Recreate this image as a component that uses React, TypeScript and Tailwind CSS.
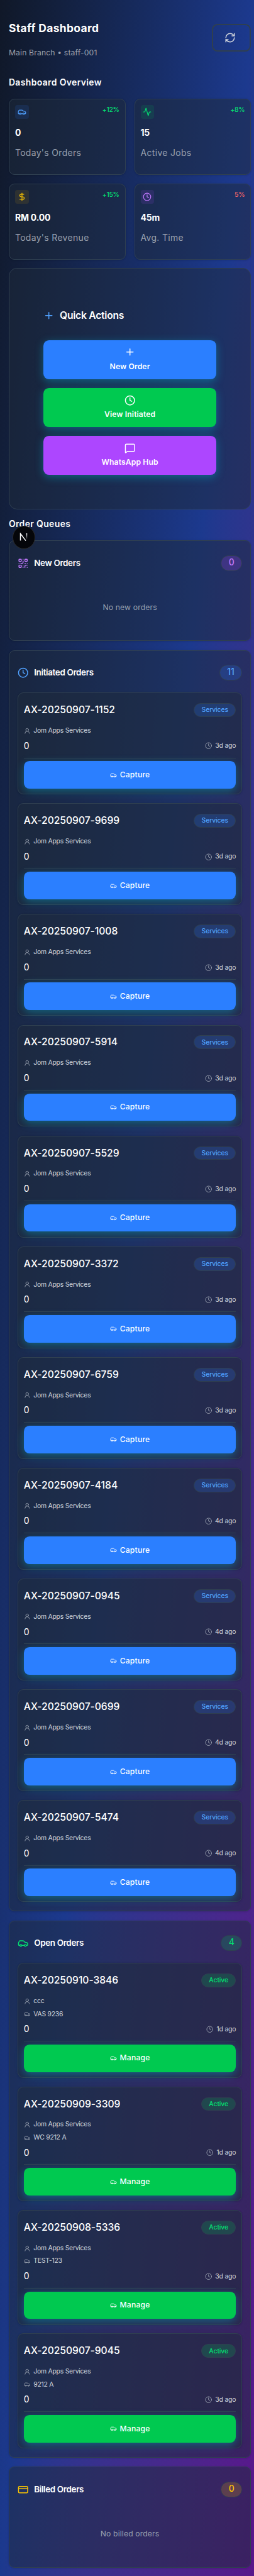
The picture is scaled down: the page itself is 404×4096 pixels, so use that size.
import React from "react";
import { Activity, Car, Clock, CreditCard, DollarSign, MessageSquare, Plus, QrCode, RefreshCw, UserRound } from "lucide-react";

const initiated = [
  ["1152", "3d"], ["9699", "3d"], ["1008", "3d"], ["5914", "3d"], ["5529", "3d"], ["3372", "3d"],
  ["6759", "3d"], ["4184", "4d"], ["0945", "4d"], ["0699", "4d"], ["5474", "4d"],
];

const open = [
  { id: "AX-20250910-3846", who: "ccc", plate: "VAS 9236", age: "1d" },
  { id: "AX-20250909-3309", who: "Jom Apps Services", plate: "WC 9212 A", age: "1d" },
  { id: "AX-20250908-5336", who: "Jom Apps Services", plate: "TEST-123", age: "3d" },
  { id: "AX-20250907-9045", who: "Jom Apps Services", plate: "9212 A", age: "3d" },
];

const glow = "shadow-[0_4px_14px_rgba(6,182,212,0.4)]";

function Stat({ icon, box, delta, deltaColor, value, label }: {
  icon: React.ReactNode; box: string; delta: string; deltaColor: string; value: string; label: string;
}) {
  return (
    <div className="h-[121.5px] rounded-[9px] border border-[#2f3f50] bg-[#1e2939]/50 px-[9px] pt-[9px] shadow-sm">
      <div className="flex items-start justify-between">
        <div className={`flex size-[22px] items-center justify-center rounded-[4px] ${box}`}>{icon}</div>
        <span className={`pt-[1px] text-[10.5px] leading-[15px] font-medium tracking-[-0.3px] ${deltaColor}`}>{delta}</span>
      </div>
      <div className="mt-[12px] text-[14px] leading-[21px] font-bold tracking-[-0.15px] text-white">{value}</div>
      <div className="mt-[10px] text-[14px] leading-[24px] tracking-[0.35px] text-[#99a1af]">{label}</div>
    </div>
  );
}

function Action({ icon, label, color }: { icon: React.ReactNode; label: string; color: string }) {
  return (
    <button className={`flex h-[62.6px] w-full flex-col items-center justify-start gap-[4px] rounded-[9px] pt-[11px] text-white ${glow} ${color}`}>
      {icon}
      <span className="text-[12.25px] leading-[20px] font-semibold tracking-[0.1px]">{label}</span>
    </button>
  );
}

function Queue({ icon, title, count, badge, className, children }: {
  icon: React.ReactNode; title: string; count: number; badge: string; className: string; children: React.ReactNode;
}) {
  return (
    <section className={`rounded-[9px] border border-[#2f3f50] bg-[#1e2939]/50 px-[13px] pt-[23px] shadow-sm ${className}`}>
      <div className="flex h-[25px] items-center justify-between">
        <div className="flex items-center gap-[9px]">
          {icon}
          <h3 className="text-[13.5px] leading-[20px] font-semibold tracking-[-0.36px] text-white">{title}</h3>
        </div>
        <span className={`flex h-[25px] items-center rounded-full border border-[#2f3f50] px-[11.5px] pb-[2px] text-[14px] leading-none font-medium ${badge}`}>{count}</span>
      </div>
      {children}
    </section>
  );
}

function Order({ id, who, plate, age, tag, tagColor, action, actionColor }: {
  id: string; who: string; plate?: string; age: string; tag: string; tagColor: string; action: string; actionColor: string;
}) {
  return (
    <article className={`rounded-[9px] border border-[#2f3f50] bg-[#1e2939]/50 px-[9px] pt-[16px] shadow-sm ${plate ? "h-[183.3px]" : "h-[162.7px]"}`}>
      <div className="flex h-[22px] items-center justify-between">
        <h4 className="text-[15.75px] leading-[22px] font-medium tracking-[-0.04px] text-white">{id}</h4>
        <span className={`flex h-[22px] items-center rounded-full border border-[#2f3f50] px-[11.5px] text-[10.5px] font-medium tracking-[-0.15px] ${tagColor}`}>{tag}</span>
      </div>
      <div className="mt-[13px] flex h-[18px] items-center gap-[5px] text-[10.5px] tracking-[-0.26px] text-[#d1d5dc]">
        <UserRound className="size-[10.5px] text-[#99a1af]" /><span>{who}</span>
      </div>
      {plate && (
        <div className="mt-[2.6px] flex h-[18px] items-center gap-[5px] text-[10.5px] tracking-[-0.26px] text-[#d1d5dc]">
          <Car className="size-[10.5px] text-[#99a1af]" /><span>{plate}</span>
        </div>
      )}
      <div className="mt-[4.4px] flex h-[22px] items-center justify-between">
        <span className="text-[14px] text-white">0</span>
        <span className="flex items-center gap-[5px] text-[10.5px] tracking-[-0.2px] text-[#d1d5dc]">
          <Clock className="size-[11.5px] text-[#99a1af]" />{age} ago
        </span>
      </div>
      <div className="mt-[7.5px] border-t border-[#2f3f50] pt-[4.7px]">
        <button className={`flex h-[44px] w-full items-center justify-center gap-[5px] rounded-[9px] text-[12.25px] font-medium tracking-[0.18px] text-white ${glow} ${actionColor}`}>
          <Car className="size-[11px]" />{action}
        </button>
      </div>
    </article>
  );
}

export default function App() {
  return (
    <div className="h-[4096px] w-[404px] overflow-hidden bg-linear-to-br from-[#101828] via-[#1c398e] to-[#59168b] font-['Inter',sans-serif]">
      <div className="relative w-[406px] pr-[5px] pl-[14px] [zoom:0.9956]">
        <header className="flex h-[114px] items-start justify-between pt-[33px]">
          <div>
            <h1 className="text-[17.5px] leading-[24px] font-bold tracking-[0.36px] text-white">Staff Dashboard</h1>
            <p className="mt-[17px] text-[12.25px] leading-[20px] tracking-[0.14px] text-[#99a1af]">Main Branch • staff-001</p>
          </div>
          <button className="mt-[5px] flex h-[44px] w-[63px] items-center justify-center rounded-[9px] border-[2.02px] border-[#2f3f50] pr-[4px] text-[#d1d5dc]">
            <RefreshCw className="size-[18px]" />
          </button>
        </header>
        <h2 className="mt-[9px] h-[35px] text-[14px] leading-[20px] font-semibold tracking-[0.38px] text-white">Dashboard Overview</h2>
        <div className="grid grid-cols-2 gap-[14px]">
          <Stat icon={<Car className="size-[14px] text-[#51a2ff]" />} box="bg-[#2b7fff]/12" delta="+12%" deltaColor="text-[#05df72]" value="0" label="Today's Orders" />
          <Stat icon={<Activity className="size-[14px] text-[#05df72]" />} box="bg-[#00c950]/12" delta="+8%" deltaColor="text-[#05df72]" value="15" label="Active Jobs" />
          <Stat icon={<DollarSign className="size-[14px] text-[#fdc700]" />} box="bg-[#f0b100]/10" delta="+15%" deltaColor="text-[#05df72]" value="RM 0.00" label="Today's Revenue" />
          <Stat icon={<Clock className="size-[14px] text-[#c27aff]" />} box="bg-[#ad46ff]/12" delta="5%" deltaColor="text-[#ff6467]" value="45m" label="Avg. Time" />
        </div>
        <section className="mt-[13px] h-[386px] rounded-[13px] border border-[#2f3f50] bg-[#1e2939]/50 px-[54px] pt-[64px]">
          <div className="flex h-[22px] items-center gap-[9px]">
            <Plus className="size-[17.5px] text-[#51a2ff]" />
            <h3 className="text-[15.75px] font-semibold tracking-[-0.26px] text-white">Quick Actions</h3>
          </div>
          <div className="mt-[28px] flex flex-col gap-[13.8px]">
            <Action icon={<Plus className="size-[17.5px]" />} label="New Order" color="bg-[#2b7fff]" />
            <Action icon={<Clock className="size-[17.5px]" />} label="View Initiated" color="bg-[#00c950]" />
            <Action icon={<MessageSquare className="size-[17.5px]" />} label="WhatsApp Hub" color="bg-[#ad46ff]" />
          </div>
        </section>
        <h2 className="mt-[14px] h-[35px] text-[14px] leading-[20px] font-semibold tracking-[0.38px] text-white">Order Queues</h2>
        <div className="flex flex-col gap-[14.3px]">
          <Queue className="h-[160.9px]" icon={<QrCode className="size-[17.5px] text-[#c27aff]" />} title="New Orders" count={0} badge="bg-[#ad46ff]/20 text-[#c27aff]">
            <p className="pt-[48px] text-center text-[12.25px] leading-[20px] tracking-[0.13px] text-[#99a1af]">No new orders</p>
          </Queue>
          <Queue className="h-[2014.6px]" icon={<Clock className="size-[17.5px] text-[#51a2ff]" />} title="Initiated Orders" count={11} badge="bg-[#2b7fff]/20 text-[#51a2ff]">
            <div className="mt-[19px] flex flex-col gap-[14.2px]">
              {initiated.map(([n, age]) => (
                <Order key={n} id={`AX-20250907-${n}`} who="Jom Apps Services" age={age} tag="Services" tagColor="bg-[#2b7fff]/20 text-[#51a2ff]" action="Capture" actionColor="bg-[#2b7fff]" />
              ))}
            </div>
          </Queue>
          <Queue className="h-[858.3px]" icon={<Car className="size-[17.5px] text-[#05df72]" />} title="Open Orders" count={4} badge="bg-[#00c950]/20 text-[#05df72]">
            <div className="mt-[19px] flex flex-col gap-[14px]">
              {open.map((o) => (
                <Order key={o.id} {...o} tag="Active" tagColor="bg-[#00c950]/20 text-[#05df72]" action="Manage" actionColor="bg-[#00c950]" />
              ))}
            </div>
          </Queue>
          <Queue className="h-[161.2px]" icon={<CreditCard className="size-[17.5px] text-[#fdc700]" />} title="Billed Orders" count={0} badge="bg-[#f0b100]/20 text-[#fdc700]">
            <p className="pt-[48px] text-center text-[12.25px] leading-[20px] tracking-[0.13px] text-[#99a1af]">No billed orders</p>
          </Queue>
        </div>
        <div className="absolute top-[840px] left-[20px] flex size-[36.5px] items-center justify-center rounded-full border border-[#2b2b2b] bg-[#05060a]">
          <svg className="size-[14px]" viewBox="0 0 14 14" fill="none" strokeWidth="1.5">
            <defs>
              <linearGradient id="stem" x1="0" y1="1" x2="0" y2="11" gradientUnits="userSpaceOnUse">
                <stop stopColor="#fff" />
                <stop offset="1" stopColor="#fff" stopOpacity="0" />
              </linearGradient>
            </defs>
            <path d="M1.5 12.5V1.5l8.5 11.2" stroke="#fff" />
            <path d="M10.8 1h1.5v10h-1.5z" fill="url(#stem)" />
          </svg>
        </div>
      </div>
    </div>
  );
}
